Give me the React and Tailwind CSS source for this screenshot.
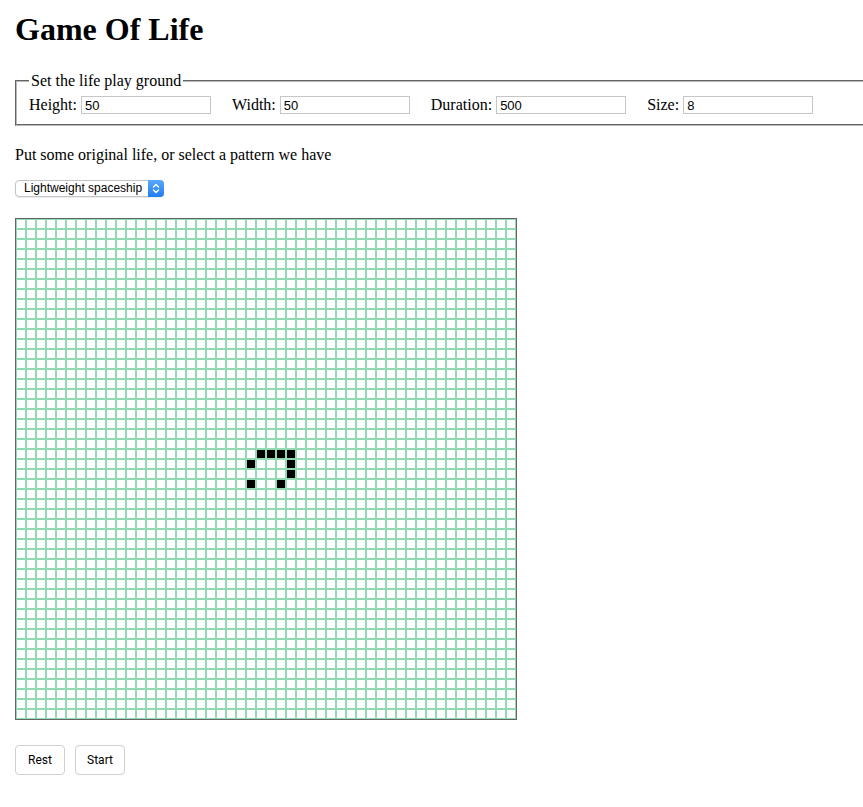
import React, { useState } from 'react';

const ROWS = 50;
const COLS = 50;

// lightweight spaceship, placed near the middle of the board
const SPACESHIP = [
  [23, 24], [23, 25], [23, 26], [23, 27],
  [24, 23], [24, 27],
  [25, 27],
  [26, 23], [26, 26],
];

const toKey = (r, c) => r * COLS + c;

const Field = ({ label, value }) => (
  <label className="flex items-center gap-[4px] mr-[21px]">
    <span>{label}</span>
    <input
      defaultValue={value}
      className="w-[130px] h-[18px] border border-[#c6c6c6] bg-white px-[3px] text-[13px] leading-[16px] font-['Liberation_Sans',Arial,sans-serif] outline-none"
    />
  </label>
);

const App = () => {
  const [alive, setAlive] = useState(() => new Set(SPACESHIP.map(([r, c]) => toKey(r, c))));

  const toggle = (key) => {
    setAlive((prev) => {
      const next = new Set(prev);
      if (next.has(key)) next.delete(key);
      else next.add(key);
      return next;
    });
  };

  const cells = [];
  for (let r = 0; r < ROWS; r++) {
    for (let c = 0; c < COLS; c++) {
      const key = toKey(r, c);
      cells.push(
        <div
          key={key}
          onClick={() => toggle(key)}
          className={`w-[10px] h-[10px] border border-[#91dab4] ${alive.has(key) ? 'bg-black' : 'bg-white'}`}
        />
      );
    }
  }

  return (
    <div className="min-h-screen overflow-x-hidden bg-white px-[15px] pb-[30px] text-black font-['Liberation_Serif','Times_New_Roman',serif]">
      <h1 className="mt-[11px] text-[32px] leading-[37px] font-bold">Game Of Life</h1>

      <fieldset className="mt-[24px] w-[900px] border-2 [border-style:groove] border-[#b8b8b8] px-[12px] pb-[8px] pt-[4px] text-[16px] leading-[18px]">
        <legend className="px-[2px]">Set the life play ground</legend>
        <div className="flex items-center h-[22px]">
          <Field label="Height:" value="50" />
          <Field label="Width:" value="50" />
          <Field label="Duration:" value="500" />
          <Field label="Size:" value="8" />
        </div>
      </fieldset>

      <p className="mt-[20px] text-[16px] leading-[18px]">Put some original life, or select a pattern we have</p>

      <div className="relative mt-[16px] w-[149px] h-[17px]">
        <select
          defaultValue="lwss"
          className="block w-full h-full appearance-none rounded-[4px] border border-[#c4c4c4] bg-white pl-[8px] pr-[16px] text-[12px] leading-[15px] font-['Liberation_Sans',Arial,sans-serif] outline-none shadow-[0_1px_1px_rgba(0,0,0,0.08)]"
        >
          <option value="none">None</option>
          <option value="glider">Glider</option>
          <option value="lwss">Lightweight spaceship</option>
          <option value="blinker">Blinker</option>
        </select>
        <div className="pointer-events-none absolute right-0 top-0 flex h-[17px] w-[16px] items-center justify-center rounded-r-[4px] bg-gradient-to-b from-[#5aa8fb] to-[#1f7cf2]">
          <svg width="8" height="11" viewBox="0 0 8 11" fill="none" stroke="white" strokeWidth="1.4" strokeLinecap="round" strokeLinejoin="round">
            <path d="M1.5 4 L4 1.5 L6.5 4" />
            <path d="M1.5 7 L4 9.5 L6.5 7" />
          </svg>
        </div>
      </div>

      <div className="mt-[21px] w-fit border border-[#666666]">
        <div className="grid grid-cols-[repeat(50,10px)]">{cells}</div>
      </div>

      <div className="mt-[25px] flex gap-[10px] font-['Roboto','Liberation_Sans',Arial,sans-serif] text-[12px]">
        <button className="w-[50px] h-[30px] rounded-[4px] border border-[#d0d0d0] bg-white">Rest</button>
        <button className="w-[50px] h-[30px] rounded-[4px] border border-[#d0d0d0] bg-white">Start</button>
      </div>
    </div>
  );
};

export default App;
